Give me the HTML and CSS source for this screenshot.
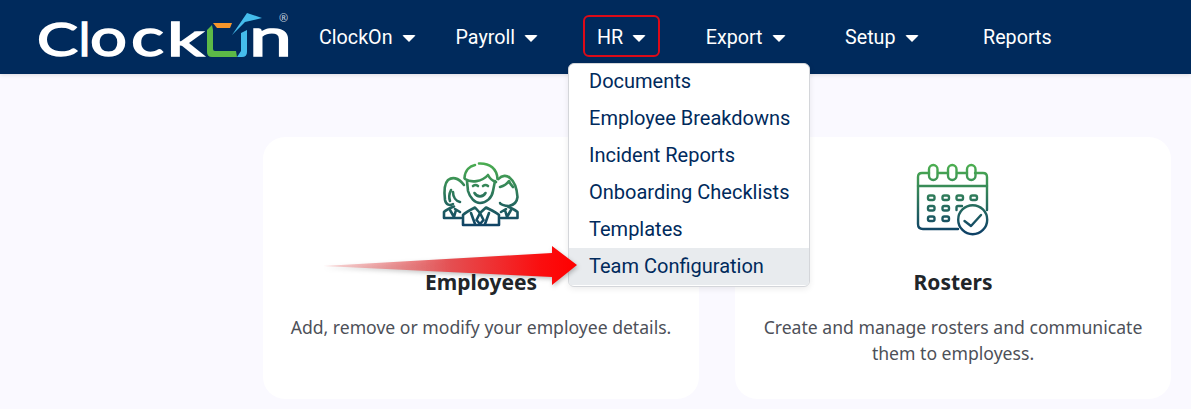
FILE: index.html
```html
<!DOCTYPE html>
<html lang="en">
<head>
<meta charset="utf-8">
<title>ClockOn</title>
<link rel="stylesheet" href="styles.css">
</head>
<body>
<header class="topbar">
  <a class="logo" href="#" aria-label="ClockOn">
    <svg width="305" height="74" viewBox="0 0 305 74">
      <text class="logo-cap" x="37" y="56" textLength="41" lengthAdjust="spacingAndGlyphs">C</text>
      <text class="logo-cap" x="79" y="56" textLength="11" lengthAdjust="spacingAndGlyphs">l</text>
      <text class="logo-low" x="90" y="56" textLength="37" lengthAdjust="spacingAndGlyphs">o</text>
      <text class="logo-low" x="131" y="56" textLength="33" lengthAdjust="spacingAndGlyphs">c</text>
      <text class="logo-cap" x="167" y="56" textLength="37" lengthAdjust="spacingAndGlyphs">k</text>
      <path class="logo-green" d="M212 25 L207 30 L207 52 Q207 57 212 57 L237 57 L236 51 L215 51 Q213 51 213 49 L213 30 Z"/>
      <path class="logo-orange" d="M213 23 L232 23 L230 28 L217 28 Z"/>
      <path class="logo-blue" d="M241 33 L247 30 L247 52 Q247 57 242 57 L237 57 L241 51 Z"/>
      <path class="logo-blue" d="M232 35 L247 13 L262 18 L245 22 Z"/>
      <text class="logo-low" x="249" y="56" textLength="43" lengthAdjust="spacingAndGlyphs">n</text>
      <text class="logo-reg" x="279" y="22">®</text>
    </svg>
  </a>
  <nav class="menu">
    <div class="item item-clockon">ClockOn <span class="caret"></span></div>
    <div class="item item-payroll">Payroll <span class="caret"></span></div>
    <div class="item item-hr active">HR <span class="caret"></span>
      <ul class="dropdown">
        <li>Documents</li>
        <li>Employee Breakdowns</li>
        <li>Incident Reports</li>
        <li>Onboarding Checklists</li>
        <li>Templates</li>
        <li class="hover">Team Configuration</li>
      </ul>
    </div>
    <div class="item item-export">Export <span class="caret"></span></div>
    <div class="item item-setup">Setup <span class="caret"></span></div>
    <div class="item item-reports">Reports</div>
  </nav>
</header>
<main class="content">
  <section class="card">
    <svg class="icon" width="120" height="90" viewBox="1 0 120 90" fill="none">
      <defs>
        <linearGradient id="g1" gradientUnits="userSpaceOnUse" x1="0" y1="12" x2="0" y2="76">
          <stop offset="0" stop-color="#4caf50"/><stop offset="1" stop-color="#0f4266"/>
        </linearGradient>
      </defs>
      <g stroke="url(#g1)" stroke-width="2.600" stroke-linecap="round" stroke-linejoin="round">
        <path d="M44.500 28 C45 20 50 16 55 15 M59 13.500 C70 13 77 19 77.500 29"/>
        <path d="M45 29 C51 33 62 32 68 25 C70 29 73 31 76 32"/>
        <path d="M47 31 L48 41 C50 48 55 53 60 53 C66 53 72 48 73 41 L75 31"/>
        <path d="M53 36 Q55.500 34 58 36 M63 36 Q65.500 34 68 36 M54.500 43 C57 47.500 63 47.500 65.500 43"/>
        <path d="M43 75 L43 65 C46 62 50 60 55 57.500 L60 63 L66 57.500 C71 60 76 62 79 65 L79 75 Z"/>
        <path d="M60 63 L56.500 70 L60 74 L63.500 70 Z M51 63 L55 74 M69 63 L65 74"/>
        <path d="M44 35 C38 27 32 27 28 30 C24 34 24 42 25 50 C26 55 30 56 33 54 M31 40 C29 44 29 48 30 51 M40 52 C36 51 33 47 33 42"/>
        <path d="M24 68 L24 62 C27 59 30 58 34 56.500 M24 68 L41 68"/>
        <path d="M30 60 L34 67 M36 60 L34 67 M35 59 L40 62"/>
        <path d="M78.500 29 C82 25 87 25 90 28 C95 32 97 40 97.500 47 C97 52 94 55 89 56 C84 56 80 54 80 53"/>
        <path d="M80 37 C84 36 87 34 89 31 C90 34 92 36 93 37"/>
        <path d="M97.500 68 L97.500 62 C94 59 91 58 88 56.500 M81 68 L97.500 68"/>
        <path d="M91 60 L87 67 M85 60 L87 67 M86 59 L81 62"/>
      </g>
    </svg>
    <h2 class="title">Employees</h2>
    <p class="desc">Add, remove or modify your employee details.</p>
  </section>
  <section class="card">
    <svg class="icon" width="110" height="90" viewBox="-2 0 110 90" fill="none">
      <defs>
        <linearGradient id="g2" gradientUnits="userSpaceOnUse" x1="0" y1="14" x2="0" y2="82">
          <stop offset="0" stop-color="#4caf50"/><stop offset="1" stop-color="#0f4266"/>
        </linearGradient>
      </defs>
      <g stroke="url(#g2)" stroke-width="2.400" stroke-linecap="round" stroke-linejoin="round">
        <path d="M38 23 L48 23 M57 23 L67 23 M75 23 L83 23 Q87 23 87 27 L87 60 M58 79 L23 79 Q18 79 18 74 L18 27 Q18 23 22 23 L29 23"/>
        <path d="M18 36 L87 36"/>
        <rect x="29" y="15" width="8.500" height="15" rx="4.200"/>
        <rect x="48" y="15" width="8.500" height="15" rx="4.200"/>
        <rect x="67" y="15" width="8.500" height="15" rx="4.200"/>
        <rect x="28" y="45.500" width="6.500" height="4.500" rx="1.800"/>
        <rect x="42.500" y="45.500" width="6.500" height="4.500" rx="1.800"/>
        <rect x="56.500" y="45.500" width="6.500" height="4.500" rx="1.800"/>
        <rect x="70.500" y="45.500" width="6.500" height="4.500" rx="1.800"/>
        <rect x="28" y="56" width="6.500" height="4.500" rx="1.800"/>
        <rect x="42.500" y="56" width="6.500" height="4.500" rx="1.800"/>
        <path d="M56.500 60 L56.500 57.500 Q56.500 56 58 56 L62 56"/>
        <rect x="28" y="66.500" width="6.500" height="4.500" rx="1.800"/>
        <rect x="42.500" y="66.500" width="6.500" height="4.500" rx="1.800"/>
        <circle cx="72.700" cy="69.700" r="14.500"/>
        <path d="M64.500 71 L71 76 L81 65"/>
      </g>
    </svg>
    <h2 class="title">Rosters</h2>
    <p class="desc">Create and manage rosters and communicate them to employess.</p>
  </section>
</main>
<svg class="pointer" width="270" height="50" viewBox="0 0 270 50" aria-hidden="true">
  <defs>
    <linearGradient id="ar" x1="0" x2="1" y1="0" y2="0">
      <stop offset="0" stop-color="#f0a0a0" stop-opacity="0.4"/>
      <stop offset="0.5" stop-color="#e44f52"/>
      <stop offset="0.85" stop-color="#fa0f10"/>
      <stop offset="1" stop-color="#ff0000"/>
    </linearGradient>
  </defs>
  <path class="pointer-shape" d="M3 21 L232 8 L232 1 L257 20 L232 40 L232 32 Z" fill="url(#ar)"/>
</svg>
</body>
</html>
```
FILE: styles.css
```css
* { box-sizing: border-box; }
html, body { margin: 0; height: 100%; }
body {
  background: #faf9ff;
  overflow: hidden;
  font-family: Roboto, "Liberation Sans", sans-serif;
  position: relative;
}
.topbar {
  height: 74px;
  background: #002a5c;
  display: flex;
  box-shadow: 0 1px 4px rgba(0, 0, 0, .12);
}
.logo { display: block; width: 305px; flex: none; }
.logo svg { display: block; overflow: visible; }
.logo-cap, .logo-low {
  font-family: Lato, "Noto Sans", sans-serif;
  fill: #fff;
  stroke: #fff;
  stroke-width: 1.500px;
}
.logo-cap { font-size: 47px; }
.logo-low { font-size: 52px; }
.logo-green { fill: #5cb947; }
.logo-orange { fill: #f6962b; }
.logo-blue { fill: #45bdec; }
.logo-reg {
  font-family: "Noto Sans", sans-serif;
  font-size: 11px;
  fill: #c3cedb;
}
.menu {
  display: flex;
  align-items: center;
  color: #fff;
  font-size: 19.700px;
  padding-bottom: 2px;
}
.item {
  position: relative;
  height: 42px;
  padding: 2px 12px 0;
  display: flex;
  align-items: center;
  gap: 9px;
  white-space: nowrap;
  flex: none;
  border: 2px solid transparent;
  border-radius: 6px;
}
.item-payroll { margin-left: 12px; }
.item-hr { margin-left: 31px; }
.item-export { margin-left: 31.500px; }
.item-setup { margin-left: 31.500px; }
.item-reports { margin-left: 36.500px; }
.active { border-color: #dc0a18; }
.caret {
  width: 0;
  height: 0;
  border-left: 7px solid transparent;
  border-right: 7px solid transparent;
  border-top: 7px solid #fff;
  border-radius: 2px;
  margin-top: 2px;
}
.dropdown {
  position: absolute;
  top: 46px;
  left: -17px;
  width: 242px;
  margin: 0;
  padding: 0 0 1px;
  list-style: none;
  background: #fff;
  color: #002a5c;
  font-size: 20px;
  border: 1px solid #d4d6da;
  border-radius: 6px;
  box-shadow: 0 2px 6px rgba(0, 0, 0, .08);
  z-index: 2;
  overflow: hidden;
}
.dropdown li {
  height: 37px;
  padding: 0 20px 2px;
  display: flex;
  align-items: center;
}
.dropdown li:first-child { height: 36px; }
.dropdown .hover { background: #e8ebee; }
.content {
  display: flex;
  gap: 36px;
  padding: 63px 0 0 263px;
}
.card {
  width: 436px;
  height: 262px;
  flex: none;
  background: #fff;
  border-radius: 22px;
  padding-top: 13px;
  text-align: center;
  font-family: "Noto Sans", "Open Sans", sans-serif;
}
.icon { display: block; margin: 0 auto; }
.title {
  margin: 27px 0 0;
  font-size: 21px;
  line-height: 30px;
  font-weight: 700;
  color: #212529;
}
.desc {
  margin: 17px 18px 0;
  font-size: 17.600px;
  line-height: 26.400px;
  color: #4d5058;
}
.pointer { position: absolute; left: 320px; top: 245px; z-index: 3; overflow: visible; }
.pointer-shape { filter: drop-shadow(1px 2px 2px rgba(0, 0, 0, .25)); }
```
